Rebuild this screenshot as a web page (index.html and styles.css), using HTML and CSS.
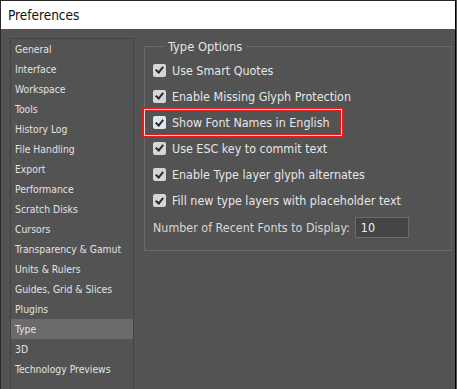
FILE: index.html
```html
<!DOCTYPE html>
<html lang="en">
<head>
  <meta charset="UTF-8">
  <title>Preferences</title>
  <link rel="stylesheet" href="styles.css">
</head>
<body>
  <div class="window">
    <div class="titlebar">Preferences</div>

    <div class="content">
      <ul class="sidebar">
        <li>General</li>
        <li>Interface</li>
        <li>Workspace</li>
        <li>Tools</li>
        <li>History Log</li>
        <li>File Handling</li>
        <li>Export</li>
        <li>Performance</li>
        <li>Scratch Disks</li>
        <li>Cursors</li>
        <li>Transparency &amp; Gamut</li>
        <li>Units &amp; Rulers</li>
        <li>Guides, Grid &amp; Slices</li>
        <li>Plugins</li>
        <li class="active">Type</li>
        <li>3D</li>
        <li>Technology Previews</li>
      </ul>

      <fieldset class="panel">
        <legend>Type Options</legend>
        <label class="option"><span class="check"></span>Use Smart Quotes</label>
        <label class="option"><span class="check"></span>Enable Missing Glyph Protection</label>
        <label class="option marked"><span class="check focus"></span>Show Font Names in English</label>
        <label class="option"><span class="check"></span>Use ESC key to commit text</label>
        <label class="option"><span class="check"></span>Enable Type layer glyph alternates</label>
        <label class="option"><span class="check"></span>Fill new type layers with placeholder text</label>
        <div class="recent">
          <span>Number of Recent Fonts to Display:</span>
          <div class="numbox">10</div>
        </div>
      </fieldset>
    </div>
  </div>
</body>
</html>
```

FILE: styles.css
```css
body {
  margin: 0;
  background-color: #535353;
  font-family: "DejaVu Sans Condensed", "DejaVu Sans", Verdana, sans-serif;
  font-stretch: condensed;
}

.window {
  width: 456px;
  height: 389px;
  border-right: 1px solid #000;
  border-left: 1px solid #2a2a2a;
  box-sizing: border-box;
  overflow: hidden;
  background-color: #535353;
}

.titlebar {
  height: 29px;
  line-height: 28px;
  background-color: #fff;
  border-top: 1px solid #2a2a2a;
  box-sizing: border-box;
  padding-left: 7px;
  font-size: 13.5px;
  color: #111;
}

.content {
  display: flex;
  align-items: flex-start;
  padding: 9px 0 0 9px;
}

.sidebar {
  list-style: none;
  margin: 0;
  padding: 0;
  width: 124px;
  height: 360px;
  border: 1px solid #434343;
  box-sizing: border-box;
  font-size: 10.3px;
  color: #e2e2e2;
}

.sidebar li {
  height: 20px;
  line-height: 20px;
  padding-left: 4px;
}

.sidebar li.active {
  background-color: #6b6b6b;
}

.panel {
  margin: 1px 0 0 10px;
  padding: 3px 0 10px 8px;
  width: 308px;
  height: 212px;
  box-sizing: border-box;
  border: 1px solid #6a6a6a;
  border-right-color: #5e5e5e;
  font-size: 12.4px;
  color: #e6e6e6;
}

.panel legend {
  padding: 0 4px;
  margin-left: 11px;
  font-size: 12.8px;
  color: #e6e6e6;
}

.option {
  display: flex;
  align-items: center;
  gap: 6px;
  height: 26.2px;
}

.check {
  width: 13px;
  height: 13px;
  border-radius: 2px;
  background-color: #d6d6d6;
  position: relative;
  flex-shrink: 0;
}

.check::after {
  content: "";
  position: absolute;
  left: 4px;
  top: 1.5px;
  width: 3px;
  height: 6px;
  border: solid #2b2b2b;
  border-width: 0 2px 2px 0;
  transform: rotate(40deg);
}

.check.focus {
  background-color: #dfe6f2;
}

.option.marked {
  margin: -2px 0 -3px -11px;
  padding-left: 9px;
  width: 202px;
  height: 31px;
  border: 2px solid #e21b1b;
  box-shadow: inset 0 0 0 1px #f6d6d6, inset 0 0 0 2px #d42020;
  box-sizing: border-box;
}

.recent {
  display: flex;
  align-items: center;
  gap: 5px;
  margin-top: 3px;
  color: #d8d8d8;
}

.numbox {
  width: 54px;
  height: 21px;
  line-height: 20px;
  box-sizing: border-box;
  padding-left: 5px;
  background-color: #454545;
  border: 1px solid #6b6b6b;
  color: #f0f0f0;
}
```
